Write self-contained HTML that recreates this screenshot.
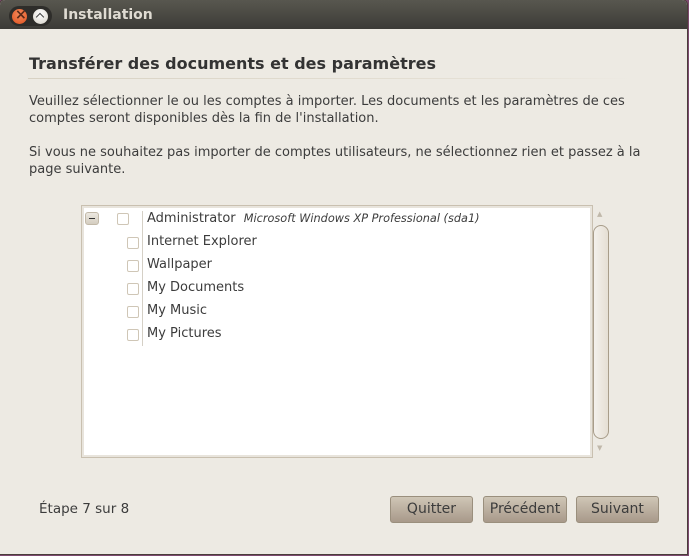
<!DOCTYPE html>
<html><head><meta charset="utf-8"><style>
*{margin:0;padding:0;box-sizing:border-box}
body{width:689px;height:556px;background:#7d4a70;font-family:"DejaVu Sans","Liberation Sans",sans-serif;color:#3c3c3c;overflow:hidden;position:relative}
.win{position:absolute;left:-1px;top:-1px;width:689px;height:556px;background:#edeae3;border:1px solid #4a3d3a;border-radius:6px 6px 0 0;overflow:hidden}
.tb{position:absolute;left:0;top:0;right:0;height:29px;background:linear-gradient(#58574f,#3c3b37)}
.tb .t{position:absolute;left:63px;top:7px;color:#dfdbd2;font-weight:bold;font-size:14px}
.btns{position:absolute;left:9px;top:6px;width:43px;height:20px;border-radius:10px;background:#2e2d2a}
.c{position:absolute;top:3px;width:15px;height:15px;border-radius:50%}
.x{left:3px;background:radial-gradient(circle at 50% 35%,#f58a5c,#e0521f);}
.u{left:24px;background:radial-gradient(circle at 50% 35%,#fff,#d6d2c8)}
.x:after{content:"×";position:absolute;left:3px;top:-2px;font-size:14px;color:#5a2a18;font-weight:bold}
.u:after{content:"";position:absolute;left:4px;top:5px;width:5px;height:5px;border-left:1.6px solid #444;border-top:1.6px solid #444;transform:rotate(45deg)}
h1{position:absolute;left:29px;top:54px;font-size:16px;font-weight:bold;color:#333}
.sep{position:absolute;left:28px;top:78px;width:604px;height:1px;background:linear-gradient(90deg,#d8d2c4,#e6e1d6 80%,#edeae3)}
p{position:absolute;left:29px;font-size:13px;line-height:17px;width:640px}
.list{position:absolute;left:81px;top:205px;width:512px;height:253px;background:#fff;border:1px solid #c9c0b0;box-shadow:inset 0 0 0 2px #e8e4dc}
.vl{position:absolute;left:142px;top:211px;width:1px;height:135px;background:#d5d0c6}
.row{position:absolute;font-size:13px;color:#3c3c3c;left:147px}
.cb{position:absolute;width:12px;height:12px;border:1px solid #cfc6b6;border-radius:2px;background:#fff}
.exp{position:absolute;left:85px;top:212px;width:14px;height:13px;border-radius:3px;background:linear-gradient(#ece8e0,#d4cdc0);border:1px solid #c2b9a8}
.exp:after{content:"";position:absolute;left:3px;top:5px;width:6px;height:1px;background:#333}
.sb{position:absolute;left:593px;top:225px;width:16px;height:214px;border:1px solid #a89d8a;border-radius:8px;background:linear-gradient(90deg,#f4f1ec,#e5dfd4)}
.ar{position:absolute;left:597px;font-size:7px;color:#c0b8aa}
.b{position:absolute;top:496px;height:27px;border:1px solid #9a8f7d;border-radius:3px;background:linear-gradient(#cfc6b6,#a8998a);font-size:14px;color:#3c3c3c;text-align:center;line-height:25px}
</style></head><body>
<div class="win">
<div class="tb"><div class="btns"><div class="c x"></div><div class="c u"></div></div><div class="t">Installation</div></div>
<h1>Transférer des documents et des paramètres</h1>
<div class="sep"></div>
<p style="top:93px">Veuillez sélectionner le ou les comptes à importer. Les documents et les paramètres de ces comptes seront disponibles dès la fin de l'installation.</p>
<p style="top:144px">Si vous ne souhaitez pas importer de comptes utilisateurs, ne sélectionnez rien et passez à la page suivante.</p>
<div class="list"></div>
<div class="vl"></div>
<div class="exp"></div>
<div class="cb" style="left:117px;top:213px"></div>
<div class="row" style="top:211px">Administrator <i style="font-size:11.3px;margin-left:4px">Microsoft Windows XP Professional (sda1)</i></div>
<div class="cb" style="left:127px;top:237px"></div><div class="row" style="top:234px">Internet Explorer</div>
<div class="cb" style="left:127px;top:260px"></div><div class="row" style="top:257px">Wallpaper</div>
<div class="cb" style="left:127px;top:283px"></div><div class="row" style="top:280px">My Documents</div>
<div class="cb" style="left:127px;top:306px"></div><div class="row" style="top:303px">My Music</div>
<div class="cb" style="left:127px;top:329px"></div><div class="row" style="top:326px">My Pictures</div>
<div class="ar" style="top:210px">▲</div>
<div class="sb"></div>
<div class="ar" style="top:444px">▼</div>
<div style="position:absolute;left:39px;top:501px;font-size:13.5px">Étape 7 sur 8</div>
<div class="b" style="left:390px;width:83px">Quitter</div>
<div class="b" style="left:483px;width:84px">Précédent</div>
<div class="b" style="left:576px;width:83px">Suivant</div>
</div>
</body></html>
